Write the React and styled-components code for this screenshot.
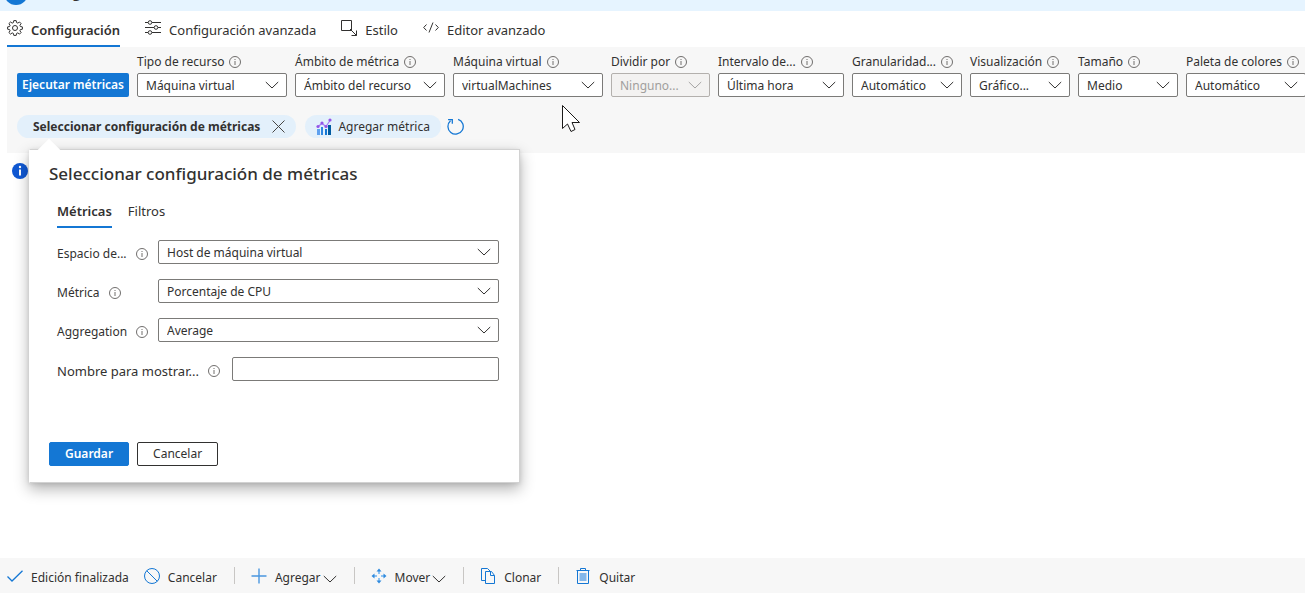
import React from 'react';
import styled, { createGlobalStyle } from 'styled-components';

const GlobalStyle = createGlobalStyle`
  * { box-sizing: border-box; }
  body {
    margin: 0;
    background: #fff;
    color: #323130;
    font-family: 'Noto Sans', 'Open Sans', sans-serif;
    font-size: 12px;
    line-height: 18px;
  }
  button, input, select { font: inherit; color: inherit; }
`;

const Page = styled.div`
  display: flex;
  flex-direction: column;
  min-height: 100vh;
  overflow: hidden;
`;

const ItemHeader = styled.header`
  display: flex;
  align-items: flex-end;
  gap: 4px;
  height: 11px;
  padding: 0 4px 6px;
  overflow: hidden;
  background: #e6f4ff;

  svg { flex: none; }
`;

const ItemTitle = styled.strong`
  padding-bottom: 3px;
  font-size: 14px;
  white-space: nowrap;
`;

const Tabs = styled.nav`
  display: flex;
  gap: 25px;
  height: 36px;
  padding: 0 7px;
`;

const Tab = styled.button`
  display: flex;
  align-items: center;
  gap: 8px;
  padding: 4px 0 0;
  border: 0;
  border-bottom: 2px solid ${({ $active }) => ($active ? '#1477d4' : 'transparent')};
  background: none;
  font-size: 13px;
  font-weight: ${({ $active }) => ($active ? 600 : 400)};

  svg { margin-bottom: 5px; }
`;

const Settings = styled.section`
  height: 106px;
  margin-left: 7px;
  padding: 2px 0 15px 10px;
  background: #f7f7f7;
`;

const FieldRow = styled.div`
  display: flex;
  align-items: flex-end;
  gap: 8px;
`;

const RunButton = styled.button`
  flex: none;
  width: 112px;
  height: 24px;
  padding: 0;
  border: 0;
  border-radius: 2px;
  background: #1477d4;
  color: #fff;
  font-weight: 600;
  line-height: 22px;
`;

const Field = styled.div`
  flex: none;
  width: ${({ $width }) => $width}px;
`;

const FieldLabel = styled.label`
  display: flex;
  align-items: center;
  gap: 5px;
  height: 24px;
  padding-top: 1px;
  white-space: nowrap;
`;

const SelectBox = styled.div`
  position: relative;
  flex: 1;

  svg {
    position: absolute;
    top: 8px;
    right: 8px;
    pointer-events: none;
    opacity: ${({ $disabled }) => ($disabled ? 0.4 : 1)};
  }
`;

const SelectInput = styled.select`
  display: block;
  width: 100%;
  height: 24px;
  padding: 1px 26px 0 8px;
  border: 1px solid #7b7a78;
  border-radius: 2px;
  background: #fff;
  appearance: none;
  opacity: 1;

  &:disabled {
    border-color: #b3b0ad;
    background: #f3f2f1;
    color: #a19f9d;
  }
`;

const Pills = styled.div`
  display: flex;
  align-items: center;
  gap: 9px;
  margin-top: 18px;
`;

const Pill = styled.div`
  display: flex;
  align-items: center;
  border-radius: 12px;
  background: #e3f0fb;
`;

const PillButton = styled.button`
  display: flex;
  align-items: center;
  gap: 6px;
  height: 23px;
  padding: ${({ $pad }) => $pad};
  border: 0;
  background: none;
  font-weight: ${({ $strong }) => ($strong ? 700 : 400)};
`;

const IconButton = styled.button`
  display: flex;
  padding: 0;
  border: 0;
  background: none;
`;

const PillGroup = styled.div`
  display: flex;
  align-items: center;
  gap: 6px;
`;

const Content = styled.main`
  flex: 1;
  padding: 10px 12px;
`;

const Callout = styled.section`
  position: absolute;
  top: 149px;
  left: 29px;
  width: 491px;
  padding: 13px 20px 16px 19px;
  border: 1px solid #d2d2d2;
  border-left-color: #fff;
  background: #fff;
  box-shadow: 0 6px 14px rgba(0, 0, 0, 0.3), 0 1px 4px rgba(0, 0, 0, 0.1);

  &::before {
    content: '';
    position: absolute;
    top: -8px;
    left: 11px;
    width: 16px;
    height: 16px;
    background: #fff;
    transform: rotate(45deg);
  }
`;

const CalloutTitle = styled.h2`
  position: relative;
  margin: 0;
  font-size: 17px;
  font-weight: 500;
  line-height: 22px;
`;

const CalloutTabs = styled.div`
  display: flex;
  gap: 16px;
  margin: 17px 0 12px 8px;
`;

const CalloutTab = styled.button`
  padding: 0 0 6px;
  border: 0;
  border-bottom: 2px solid ${({ $active }) => ($active ? '#1477d4' : 'transparent')};
  background: none;
  font-size: 13px;
  font-weight: ${({ $active }) => ($active ? 600 : 400)};
`;

const FormRow = styled.div`
  display: flex;
  align-items: center;
  height: 24px;
  margin: 0 0 15px 8px;
`;

const FormLabel = styled.label`
  display: flex;
  align-items: center;
  gap: 9px;
  width: ${({ $wide }) => ($wide ? 175 : 101)}px;
  padding-top: 3px;
  font-size: ${({ $wide }) => ($wide ? 13 : 12)}px;
  white-space: nowrap;
`;

const TextInput = styled.input`
  flex: 1;
  min-width: 0;
  height: 24px;
  border: 1px solid #7b7a78;
  border-radius: 2px;
`;

const Actions = styled.div`
  display: flex;
  gap: 8px;
  margin-top: 61px;
`;

const ActionButton = styled.button`
  min-width: 80px;
  height: 24px;
  padding: 0 15px;
  border: 1px solid ${({ $primary }) => ($primary ? '#1477d4' : '#323130')};
  border-radius: 2px;
  background: ${({ $primary }) => ($primary ? '#1477d4' : '#fff')};
  color: ${({ $primary }) => ($primary ? '#fff' : '#323130')};
  font-weight: ${({ $primary }) => ($primary ? 600 : 400)};
  line-height: 20px;
`;

const Footer = styled.footer`
  display: flex;
  align-items: center;
  height: 35px;
  padding: 0 7px;
  background: #f7f7f7;
`;

const Command = styled.button`
  display: flex;
  align-items: center;
  gap: 8px;
  padding: 4px 0 0;
  margin-right: ${({ $end }) => ($end ? 17 : 15)}px;
  border: 0;
  background: none;

  svg { margin-bottom: 4px; }
`;

const CommandText = styled.span`
  display: flex;
  align-items: center;
  gap: 2px;

  svg { margin: 2px 0 0; }
`;

const Separator = styled.span`
  width: 1px;
  height: 17px;
  margin-right: 16px;
  background: #c8c6c4;
`;

const Pointer = styled.svg`
  position: absolute;
  top: 104px;
  left: 561px;
`;

const BLUE = '#1477d4';

const Icon = ({ size = 16, color = '#323130', children }) => (
  <svg width={size} height={size} viewBox="0 0 16 16" fill="none" stroke={color} strokeWidth="1" aria-hidden="true">
    {children}
  </svg>
);

const ItemIcon = () => (
  <svg width="24" height="24" viewBox="0 0 24 24" aria-hidden="true">
    <circle cx="12" cy="12" r="12" fill={BLUE} />
  </svg>
);

const GearIcon = () => (
  <Icon>
    <circle cx="8" cy="8" r="2.5" />
    <path d="M6.8.6h2.4l.4 2 1.2.5L12.5 2l1.600 1.600-1.200 1.700.5 1.200 2 .4v2.300l-2 .4-.5 1.200 1.200 1.700-1.600 1.600-1.700-1.200-1.200.5-.4 2H6.800l-.4-2-1.200-.5-1.700 1.200-1.600-1.600 1.200-1.700-.5-1.200-2-.4V6.900l2-.4.5-1.200L1.900 3.600 3.500 2l1.700 1.100 1.200-.5z" />
  </Icon>
);

const SlidersIcon = () => (
  <Icon>
    <path d="M0 2.500h3M7 2.500h9M0 7.500h9M13 7.500h3M0 12.500h3M7 12.500h9" />
    <circle cx="5" cy="2.500" r="1.800" />
    <circle cx="11" cy="7.500" r="1.800" />
    <circle cx="5" cy="12.500" r="1.800" />
  </Icon>
);

const StyleIcon = () => (
  <Icon>
    <path d="M.5.5h10v10H.5zM9 9l6.500 6.500M15.500 10.500v5h-5" />
  </Icon>
);

const CodeIcon = () => (
  <Icon>
    <path d="M3.500 4.500L.7 7.500l2.800 3M12.500 4.500l2.800 3-2.800 3M10 2.500l-4 10" />
  </Icon>
);

const InfoIcon = () => (
  <svg width="12" height="12" viewBox="0 0 12 12" fill="none" stroke="#605e5c" aria-hidden="true">
    <circle cx="6" cy="6" r="5.500" strokeWidth=".9" />
    <path d="M6 5v4M6 3v1" strokeWidth=".9" />
  </svg>
);

const Chevron = () => (
  <svg width="14" height="8" viewBox="0 0 14 8" fill="none" stroke="#323130" aria-hidden="true">
    <path d="M.8 1L7 7l6.200-6" />
  </svg>
);

const CloseIcon = () => (
  <svg width="13" height="13" viewBox="0 0 13 13" fill="none" stroke="#484644" aria-hidden="true">
    <path d="M.5.5l12 12M12.500.5l-12 12" />
  </svg>
);

const ChartIcon = () => (
  <svg width="16" height="17" viewBox="0 0 16 17" aria-hidden="true">
    <path d="M1 11h3v6H1z" fill="#5ea0ef" />
    <path d="M5 9h2v8H5z" fill="#2f86e0" />
    <path d="M9 11h2v6H9z" fill="#1477d4" />
    <path d="M12 7h3v10h-3z" fill="#005ba1" />
    <path d="M2 8.500l4-3 4 3 4-6" fill="none" stroke="#a67af4" strokeWidth="1.200" />
    <g fill="#9455e8">
      <circle cx="2" cy="8.500" r="1.600" />
      <circle cx="6" cy="5" r="1.600" />
      <circle cx="10" cy="8.500" r="1.600" />
      <circle cx="14" cy="2" r="1.600" />
    </g>
  </svg>
);

const RefreshIcon = () => (
  <Icon size={17} color={BLUE}>
    <path d="M10.500 1.200A7.200 7.200 0 1 1 3.300 2.600M1 1.500h4v4" strokeWidth="1.200" />
  </Icon>
);

const FilledInfo = () => (
  <svg width="16" height="16" viewBox="0 0 16 16" aria-label="Información">
    <circle cx="8" cy="8" r="8" fill="#1058d3" />
    <circle cx="8" cy="4" r="1.200" fill="#fff" />
    <path d="M7 6.500h2v6H7z" fill="#fff" />
  </svg>
);

const CheckIcon = () => (
  <Icon color={BLUE}>
    <path d="M.5 8.500L5 13 15.500 2.800" strokeWidth="1.300" />
  </Icon>
);

const BlockIcon = () => (
  <Icon color={BLUE}>
    <circle cx="8" cy="8" r="7.500" />
    <path d="M2.700 2.700l10.600 10.600" />
  </Icon>
);

const PlusIcon = () => (
  <Icon color="#4a97e0">
    <path d="M8 .5v15M.5 8h15" strokeWidth="1.400" />
  </Icon>
);

const MoveIcon = () => (
  <Icon color="#8fc3f2">
    <path d="M8 3v3M8 10v3M3 8h3M10 8h3" strokeWidth="2" />
    <path d="M8 .5l2.500 3h-5zM8 15.500l-2.500-3h5zM.5 8l3-2.500v5zM15.500 8l-3 2.500v-5z" fill="#2f8ade" stroke="none" />
  </Icon>
);

const CopyIcon = () => (
  <Icon color={BLUE}>
    <path d="M5 12.500H1.500V.5h6l3 3M5.500 3.500h6l3 4v8h-9zM10.500 3.500v4h4" />
  </Icon>
);

const TrashIcon = () => (
  <Icon color={BLUE}>
    <path d="M4.500 5h7v8h-7z" fill="#83b7ea" stroke="none" />
    <path d="M1.500 2.500h13M5.500 2.500v-2h5v2M2.500 2.500v13h11v-13" />
  </Icon>
);

const settings = [
  { id: 'tipo', label: 'Tipo de recurso', value: 'Máquina virtual', width: 150 },
  { id: 'ambito', label: 'Ámbito de métrica', value: 'Ámbito del recurso', width: 150 },
  { id: 'maquina', label: 'Máquina virtual', value: 'virtualMachines', width: 150 },
  { id: 'dividir', label: 'Dividir por', value: 'Ninguno...', width: 99, disabled: true },
  { id: 'intervalo', label: 'Intervalo de...', value: 'Última hora', width: 126 },
  { id: 'granularidad', label: 'Granularidad...', value: 'Automático', width: 110 },
  { id: 'visualizacion', label: 'Visualización', value: 'Gráfico...', width: 100 },
  { id: 'tamano', label: 'Tamaño', value: 'Medio', width: 100 },
  { id: 'paleta', label: 'Paleta de colores', value: 'Automático', width: 120 },
];

const metricFields = [
  { id: 'espacio', label: 'Espacio de...', value: 'Host de máquina virtual' },
  { id: 'metrica', label: 'Métrica', value: 'Porcentaje de CPU' },
  { id: 'agregacion', label: 'Aggregation', value: 'Average' },
];

const Select = ({ id, value, disabled }) => (
  <SelectBox $disabled={disabled}>
    <SelectInput id={id} disabled={disabled}>
      <option>{value}</option>
    </SelectInput>
    <Chevron />
  </SelectBox>
);

const MetricCallout = () => (
  <Callout>
    <CalloutTitle>Seleccionar configuración de métricas</CalloutTitle>
    <CalloutTabs>
      <CalloutTab $active>Métricas</CalloutTab>
      <CalloutTab>Filtros</CalloutTab>
    </CalloutTabs>
    {metricFields.map(({ id, label, value }) => (
      <FormRow key={id}>
        <FormLabel htmlFor={id}>{label}<InfoIcon /></FormLabel>
        <Select id={id} value={value} />
      </FormRow>
    ))}
    <FormRow>
      <FormLabel htmlFor="nombre" $wide>Nombre para mostrar...<InfoIcon /></FormLabel>
      <TextInput id="nombre" type="text" />
    </FormRow>
    <Actions>
      <ActionButton $primary>Guardar</ActionButton>
      <ActionButton>Cancelar</ActionButton>
    </Actions>
  </Callout>
);

const App = () => (
  <>
    <GlobalStyle />
    <Page>
      <ItemHeader>
        <ItemIcon />
        <ItemTitle>Editing</ItemTitle>
      </ItemHeader>
      <Tabs>
        <Tab $active><GearIcon />Configuración</Tab>
        <Tab><SlidersIcon />Configuración avanzada</Tab>
        <Tab><StyleIcon />Estilo</Tab>
        <Tab><CodeIcon />Editor avanzado</Tab>
      </Tabs>
      <Settings>
        <FieldRow>
          <RunButton>Ejecutar métricas</RunButton>
          {settings.map(({ id, label, value, width, disabled }) => (
            <Field key={id} $width={width}>
              <FieldLabel htmlFor={id}>{label}<InfoIcon /></FieldLabel>
              <Select id={id} value={value} disabled={disabled} />
            </Field>
          ))}
        </FieldRow>
        <Pills>
          <Pill>
            <PillButton $strong $pad="0 12px 0 16px">Seleccionar configuración de métricas</PillButton>
            <PillButton $pad="0 11px 0 0" aria-label="Quitar métrica"><CloseIcon /></PillButton>
          </Pill>
          <PillGroup>
            <Pill>
              <PillButton $pad="0 11px"><ChartIcon />Agregar métrica</PillButton>
            </Pill>
            <IconButton aria-label="Actualizar"><RefreshIcon /></IconButton>
          </PillGroup>
        </Pills>
      </Settings>
      <Content>
        <FilledInfo />
      </Content>
      <Footer>
        <Command><CheckIcon />Edición finalizada</Command>
        <Command $end><BlockIcon />Cancelar</Command>
        <Separator />
        <Command $end><PlusIcon /><CommandText>Agregar<Chevron /></CommandText></Command>
        <Separator />
        <Command $end><MoveIcon /><CommandText>Mover<Chevron /></CommandText></Command>
        <Separator />
        <Command $end><CopyIcon />Clonar</Command>
        <Separator />
        <Command><TrashIcon />Quitar</Command>
      </Footer>
    </Page>
    <MetricCallout />
    <Pointer width="20" height="30" viewBox="0 0 20 30" aria-hidden="true">
      <path d="M1.500 1.500v23l5-4.500 3.500 7.500 4-2-3-7h7.500z" fill="#fff" stroke="#1b1a19" />
    </Pointer>
  </>
);

export default App;
